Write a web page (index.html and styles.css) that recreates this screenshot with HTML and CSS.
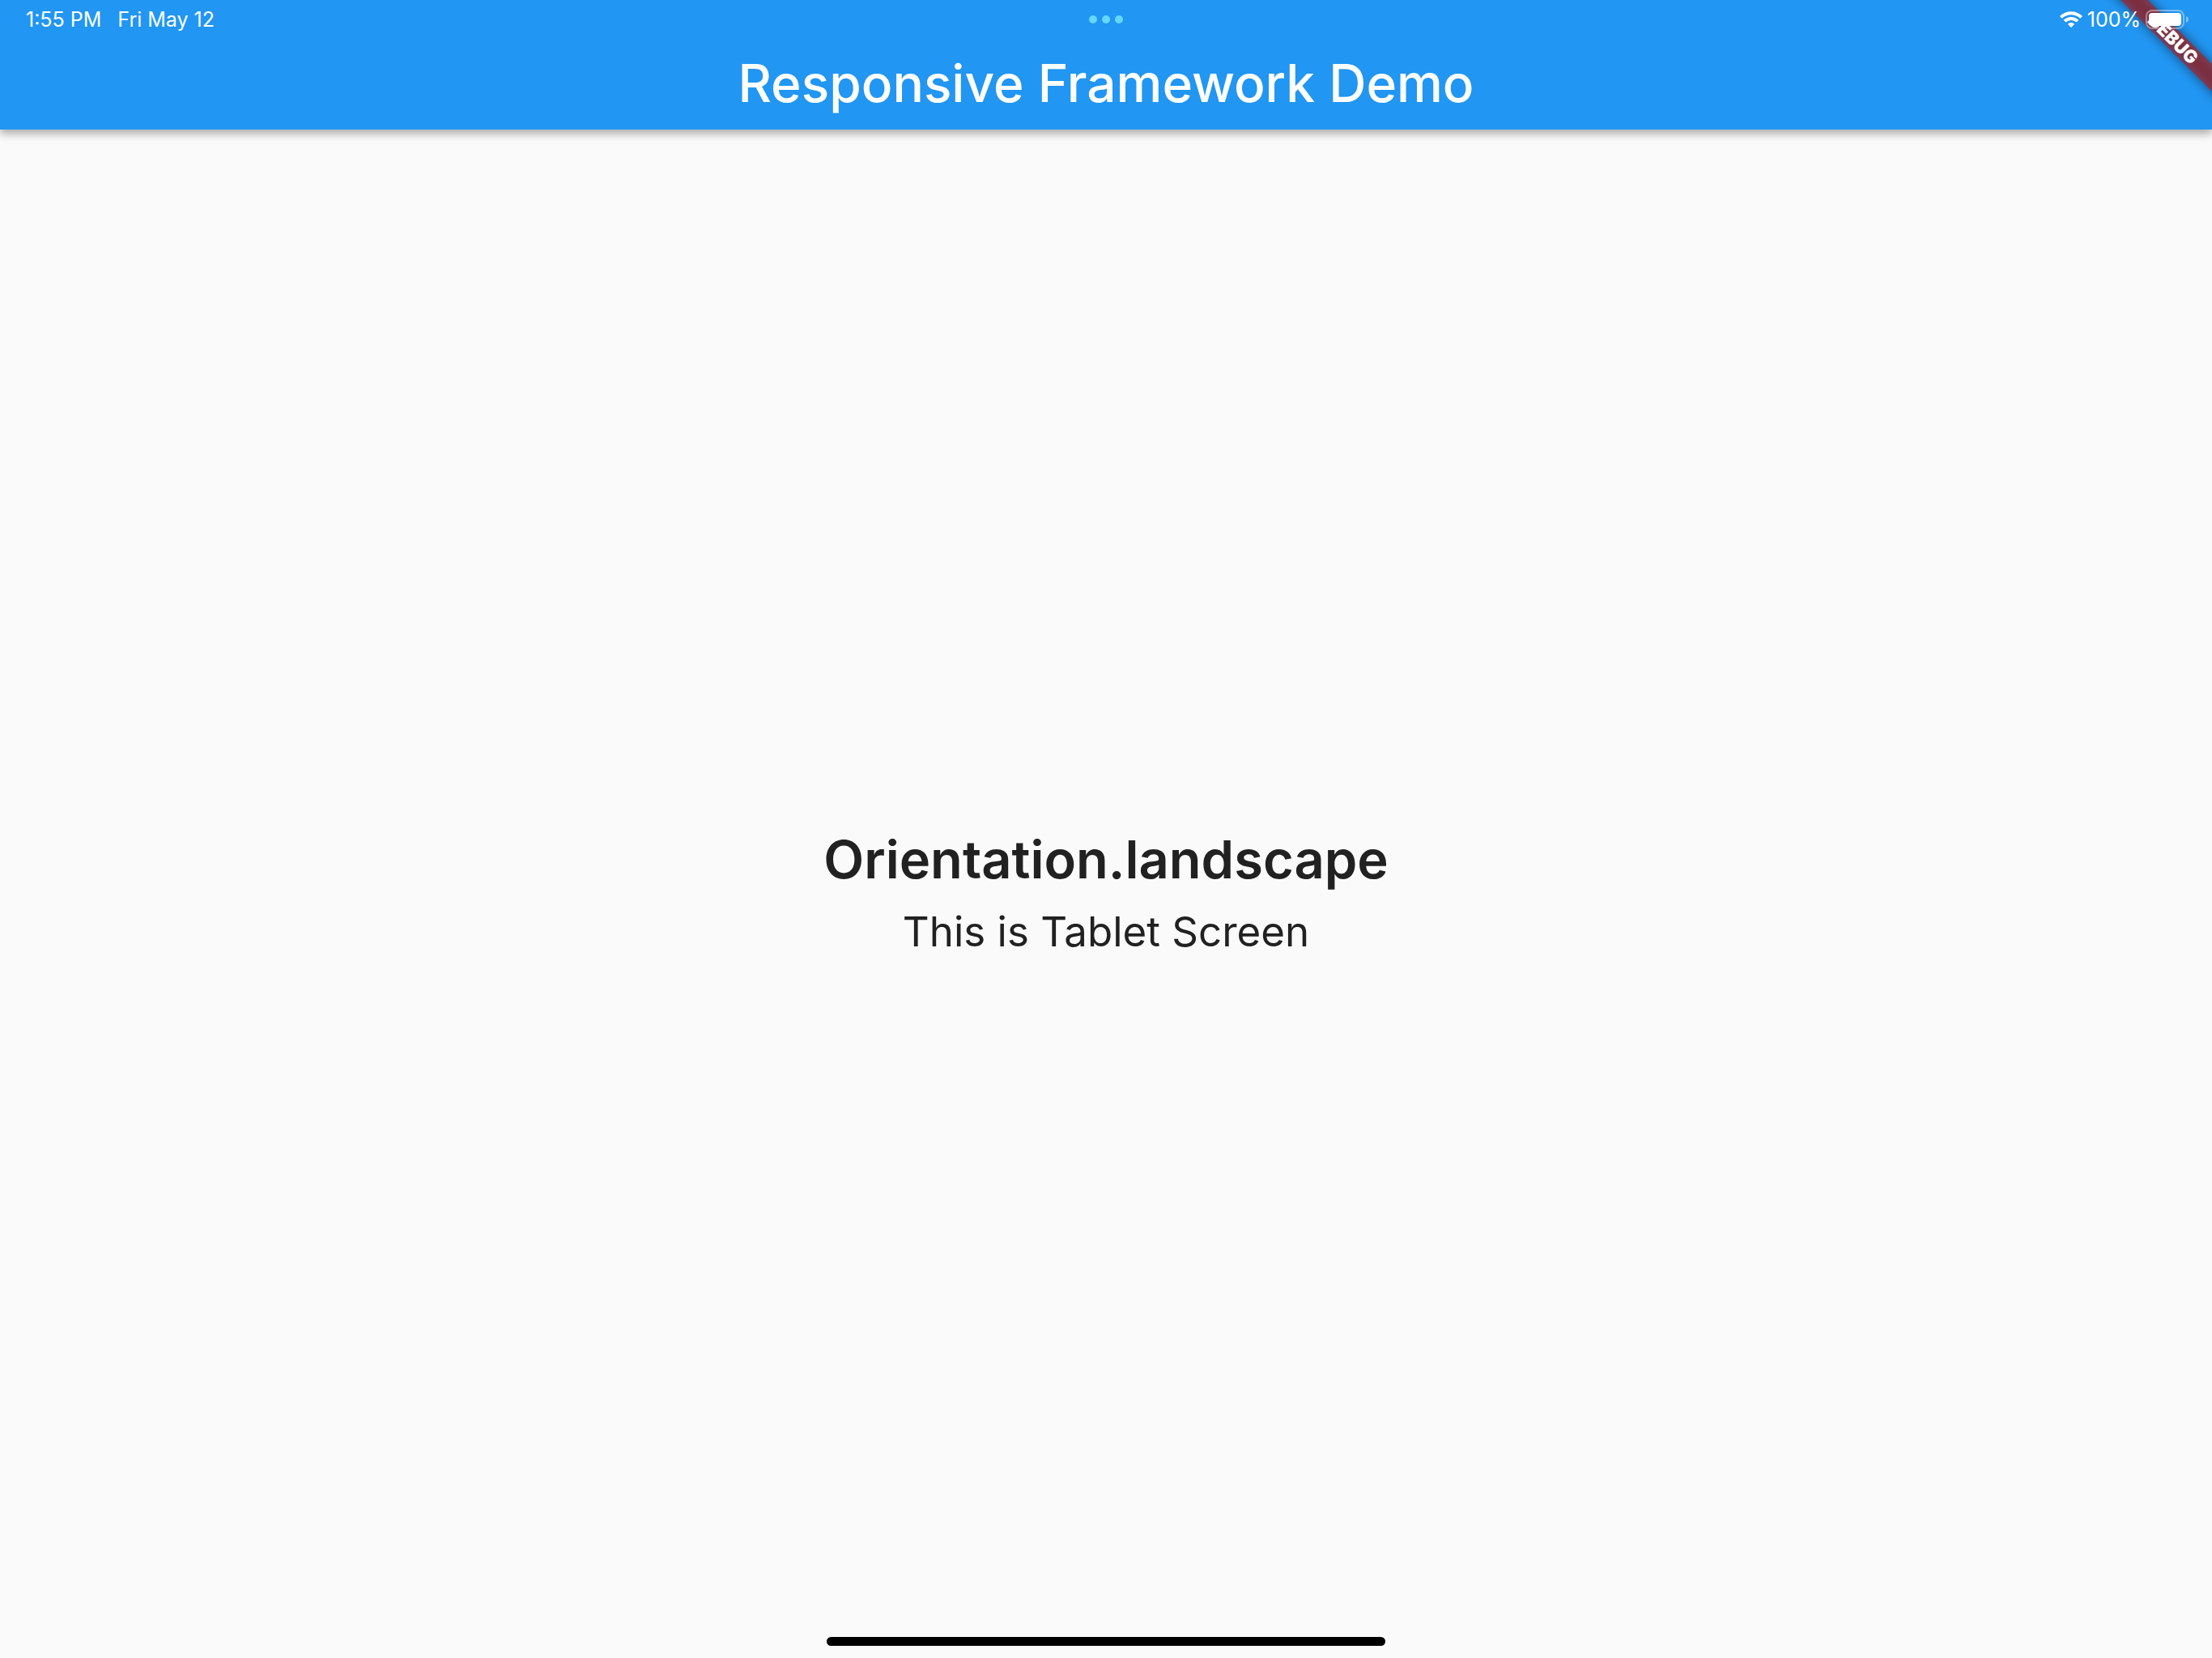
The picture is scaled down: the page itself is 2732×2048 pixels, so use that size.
FILE: index.html
```html
<!DOCTYPE html>
<html lang="en">
<head>
<meta charset="utf-8">
<meta name="viewport" content="width=device-width, initial-scale=1">
<title>Responsive Framework Demo</title>
<link rel="stylesheet" href="styles.css">
</head>
<body>
<div class="screen">
  <header class="app-bar">
    <div class="status-bar">
      <div class="status-start">
        <span>1:55 PM</span>
        <span>Fri May 12</span>
      </div>
      <div class="multitask"><i></i><i></i><i></i></div>
      <div class="status-end">
        <svg class="wifi" viewBox="0 0 28 20" width="28" height="20" aria-hidden="true">
          <g fill="none" stroke="#fff" stroke-width="4">
            <path d="M1.4 7.4A18 18 0 0 1 26.6 7.4"/>
            <path d="M6 12.2A11.4 11.4 0 0 1 22 12.2"/>
          </g>
          <path fill="#fff" d="M14 20l-4.2-4.3a6 6 0 0 1 8.4 0z"/>
        </svg>
        <span>100%</span>
        <svg class="battery" viewBox="0 0 54 24" width="54" height="24" aria-hidden="true">
          <rect x="1" y="1" width="46" height="22" rx="7" fill="none" stroke="#fff" stroke-opacity=".4" stroke-width="2"/>
          <rect x="4" y="4" width="40" height="16" rx="4" fill="#fff"/>
          <path d="M50 8v8c1.800-.7 3-2.200 3-4s-1.200-3.300-3-4z" fill="#fff" fill-opacity=".45"/>
        </svg>
      </div>
    </div>
    <h1 class="title">Responsive Framework Demo</h1>
    <div class="corner"><div class="ribbon"><span>DEBUG</span></div></div>
  </header>
  <main class="content">
    <h2 class="orientation">Orientation.landscape</h2>
    <p class="device">This is Tablet Screen</p>
  </main>
  <div class="home-indicator"></div>
</div>
</body>
</html>
```
FILE: styles.css
```css
* {
  box-sizing: border-box;
}

body {
  margin: 0;
  background: #fafafa;
  color: #212121;
  font-family: Inter, "Liberation Sans", sans-serif;
}

.screen {
  position: relative;
  display: flex;
  flex-direction: column;
  min-height: 100vh;
  overflow: hidden;
}

.app-bar {
  position: relative;
  background: #2196f3;
  color: #fff;
  box-shadow: 0 4px 8px rgba(0, 0, 0, 0.2), 0 8px 10px rgba(0, 0, 0, 0.12);
}

.status-bar {
  position: relative;
  z-index: 2;
  display: grid;
  grid-template-columns: 1fr auto 1fr;
  align-items: center;
  height: 48px;
  padding: 0 28px;
  font-size: 25px;
  line-height: 48px;
}

.status-start {
  display: flex;
  gap: 20px;
  padding-left: 4px;
}

.status-end {
  display: flex;
  align-items: center;
  justify-content: flex-end;
  gap: 6px;
}

.multitask {
  display: flex;
  gap: 6px;
}

.multitask i {
  width: 10px;
  height: 10px;
  border-radius: 50%;
  background: #64d8ff;
}

.title {
  margin: 0;
  padding-bottom: 2px;
  font-size: 64px;
  font-weight: 500;
  line-height: 110px;
  text-align: center;
}

/* Debug banner across the top right corner */
.corner {
  position: absolute;
  top: 0;
  right: 0;
  width: 160px;
  height: 160px;
  overflow: hidden;
}

.ribbon {
  position: absolute;
  top: 36px;
  left: -8px;
  width: 240px;
  height: 24px;
  transform: rotate(45deg);
  font-size: 22px;
  font-weight: 900;
  line-height: 24px;
  text-align: center;
}

.ribbon::before,
.ribbon::after {
  content: "";
  position: absolute;
  inset: 0;
}

.ribbon::before {
  background: rgba(0, 0, 0, 0.5);
  filter: blur(7px);
}

.ribbon::after {
  background: rgba(183, 28, 28, 0.63);
}

.ribbon span {
  position: relative;
  z-index: 1;
}

.content {
  flex: 1;
  display: flex;
  flex-direction: column;
  align-items: center;
  justify-content: center;
  text-align: center;
}

.orientation {
  margin: 0;
  font-size: 65px;
  font-weight: 600;
  line-height: 94px;
}

.device {
  margin: 0;
  font-size: 51px;
  font-weight: 400;
  line-height: 84px;
}

.home-indicator {
  position: absolute;
  bottom: 15px;
  left: 50%;
  width: 690px;
  height: 11px;
  border-radius: 6px;
  background: #000;
  transform: translateX(-50%);
}
```
